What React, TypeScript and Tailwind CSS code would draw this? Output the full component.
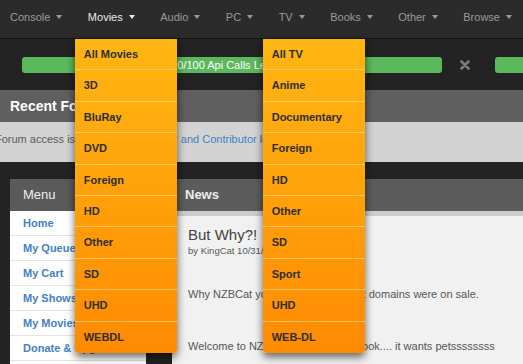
const navItems = ['Console', 'Movies', 'Audio', 'PC', 'TV', 'Books', 'Other', 'Browse'];

const movieCats = ['All Movies', '3D', 'BluRay', 'DVD', 'Foreign', 'HD', 'Other', 'SD', 'UHD', 'WEBDL'];
const tvCats = ['All TV', 'Anime', 'Documentary', 'Foreign', 'HD', 'Other', 'SD', 'Sport', 'UHD', 'WEB-DL'];

const menuLinks = ['Home', 'My Queue', 'My Cart', 'My Shows', 'My Movies', 'Donate & Upgrade', 'Profile'];

const Dropdown = ({ items, left }: { items: string[]; left: string }) => (
  <div
    className={`absolute top-[39px] ${left} w-[102px] rounded-b-[4px] bg-gradient-to-b from-[#ffb612] to-[#ff8a02] shadow-[0_4px_9px_rgba(0,0,0,0.6)] z-20`}
  >
    {items.map((item, i) => (
      <div
        key={item}
        className={`h-[31.4px] flex items-center pl-[9px] text-[11px] font-bold text-[#2e2e2e] ${
          i < items.length - 1 ? 'border-b border-[#ffd27a]/75' : ''
        }`}
      >
        {item}
      </div>
    ))}
  </div>
);

export default function App() {
  return (
    <div className="relative w-[523px] h-[364px] overflow-hidden bg-[#232323] font-['Liberation_Sans',Arial,sans-serif]">
      {/* top nav */}
      <div className="h-[39px] flex items-center pb-[4px] bg-[#2b2b2b] border-b border-[#161616]">
        {navItems.map((n) => (
          <div key={n} className="flex items-center pl-[10px] pr-[15.5px]">
            <span className={`text-[11px] ${n === 'Movies' ? 'text-[#e8e8e8]' : 'text-[#9a9a9a]'}`}>{n}</span>
            <span
              className={`ml-[6px] w-0 h-0 border-x-[3.5px] border-x-transparent border-t-[4px] ${
                n === 'Movies' ? 'border-t-[#e8e8e8]' : 'border-t-[#9a9a9a]'
              }`}
            />
          </div>
        ))}
      </div>

      {/* api bar row */}
      <div className="h-[51px] flex items-start pt-[18px] pl-[22px]">
        <div className="w-[420px] h-[16px] rounded-[3px] bg-[#5cb85c] flex items-center pl-[143px] text-[11px] text-white whitespace-nowrap">
          100/100 Api Calls Left
        </div>
        <div className="ml-[17px] mt-[2px] flex items-center justify-center w-[11px] h-[11px]">
          <svg width="10" height="10" viewBox="0 0 10 10">
            <path d="M1.5 1.5 L8.5 8.5 M8.5 1.5 L1.5 8.5" stroke="#7c7c7c" strokeWidth="2.6" strokeLinecap="round" />
          </svg>
        </div>
        <div className="ml-[25px] flex-1 h-[16px] rounded-l-[3px] bg-[#5cb85c]" />
      </div>

      {/* recent forum */}
      <div className="h-[32px] bg-[#5f5f5f] flex items-center pl-[10px] text-[14px] font-bold text-white">
        Recent Forum Posts
      </div>
      <div className="h-[40px] bg-[#d3d3d3] flex items-center pb-[6px] text-[11px] text-[#5a5a5a] whitespace-nowrap">
        <span className="-ml-[5px]">
          Forum access is restricted to Donator <span className="text-[#3f7fc4]">and Contributor</span> levels.
        </span>
      </div>
      <div className="h-[17px]" />

      {/* panels */}
      <div className="flex pl-[10px]">
        <div className="w-[136px] shrink-0">
          <div className="h-[32px] bg-[#5a5a5a] flex items-center pl-[13px] text-[13px] text-[#eeeeee]">Menu</div>
          <div className="bg-white">
            {menuLinks.map((m) => (
              <div
                key={m}
                className="h-[25px] border-b border-[#e4e4e4] flex items-center pl-[13px] text-[11px] font-bold text-[#4481c4] whitespace-nowrap overflow-hidden"
              >
                {m}
              </div>
            ))}
          </div>
        </div>

        <div className="ml-[26px] flex-1">
          <div className="h-[32px] bg-[#5c5c5c] flex items-center pl-[13px] text-[13px] font-bold text-[#eeeeee]">News</div>
          <div className="bg-[#f1f1f1] border-t-[5px] border-[#cdcdcd] pl-[16px] pt-[10px] h-[200px] text-[#555] whitespace-nowrap">
            <div className="text-[15px] leading-[18px] text-[#444]">But Why?!</div>
            <div className="text-[9.5px] leading-[12px] mt-[1px]">by KingCat 10/31/2016</div>
            <div className="text-[11px] mt-[29px]">Why NZBCat you ask? Well the best domains were on sale.</div>
            <div className="text-[11px] mt-[35px]">Welcome to NZBCat! Give a cat a book.... it wants petssssssss</div>
          </div>
        </div>
      </div>

      <Dropdown items={movieCats} left="left-[74.7px]" />
      <Dropdown items={tvCats} left="left-[262.7px]" />
    </div>
  );
}
